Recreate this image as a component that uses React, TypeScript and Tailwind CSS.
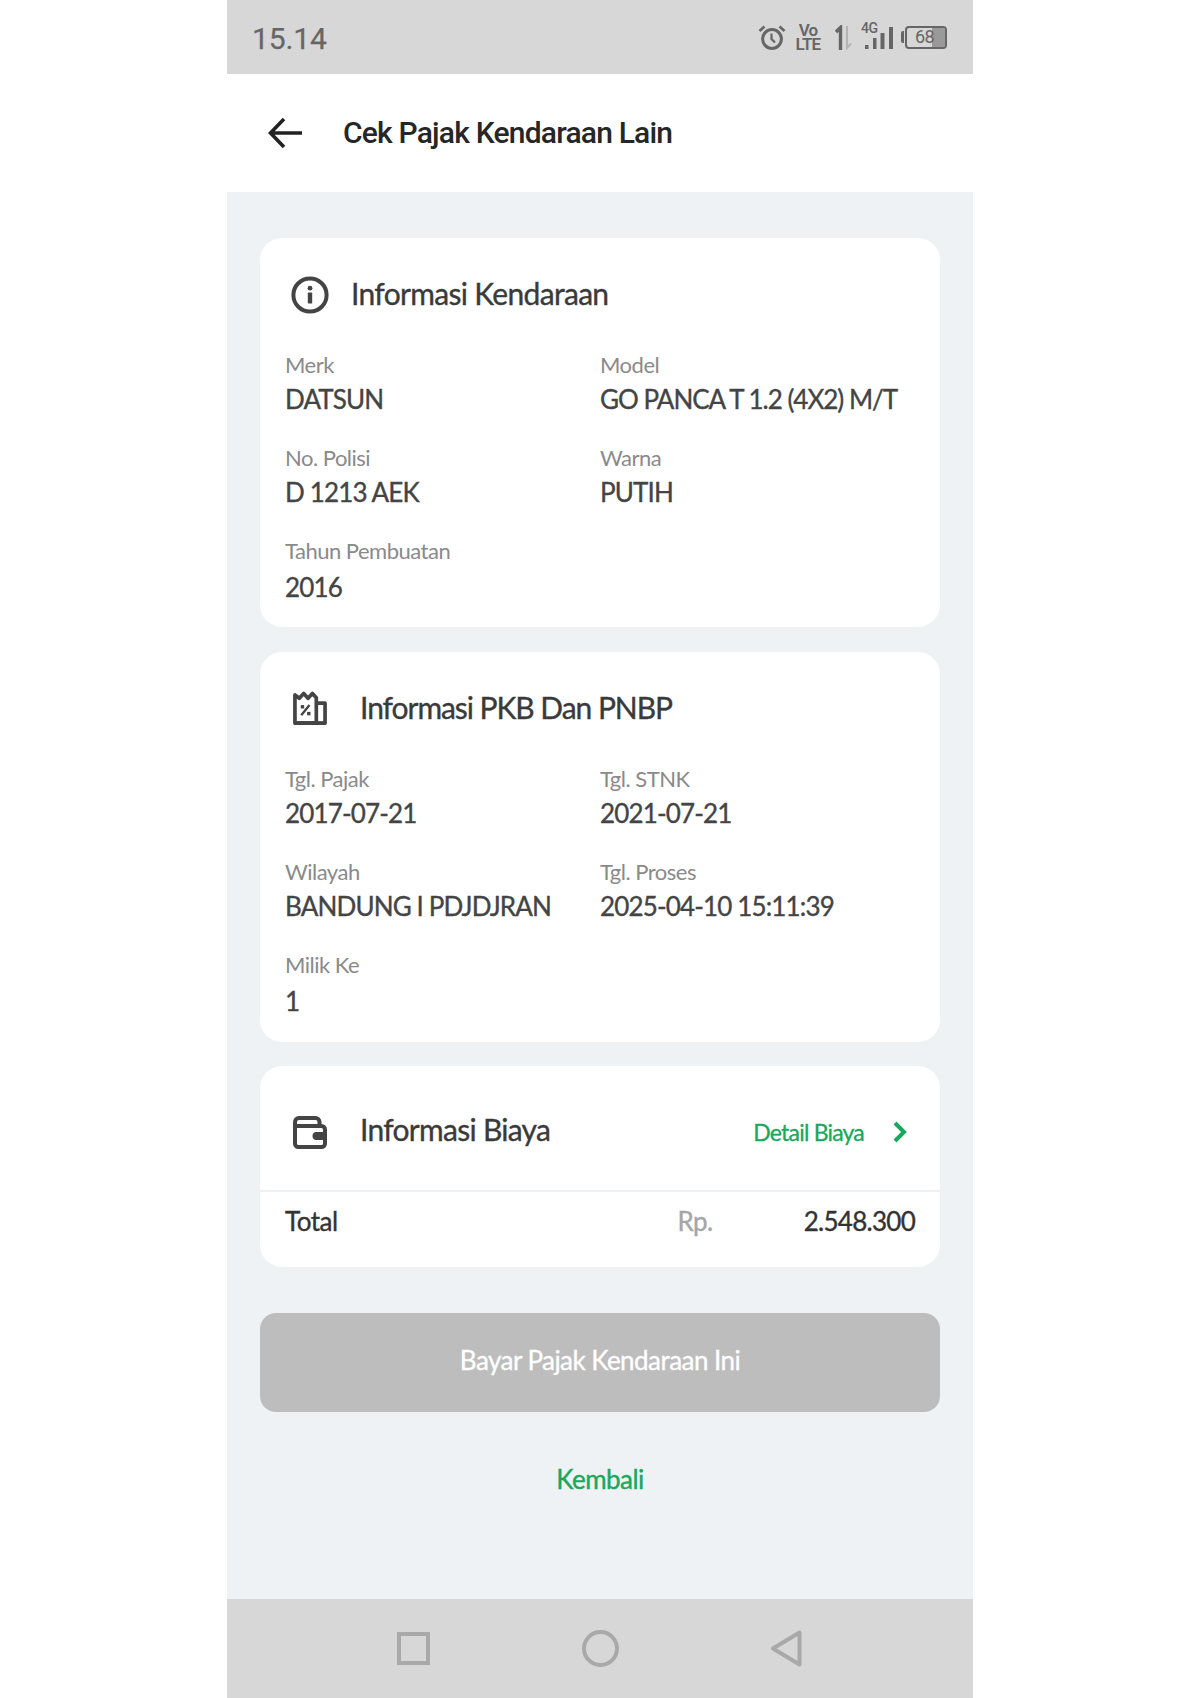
import React from "react";

const lato = "font-['Lato','Liberation_Sans',sans-serif]";

function Field({ label, value, extra, tight }: { label: string; value: string; extra?: boolean; tight?: boolean }) {
  return (
    <div>
      <div className="h-[34px] text-[22px] leading-[34px] tracking-[-0.5px] text-[#8a8a8a]">{label}</div>
      <div
        className={`h-[34px] text-[26px] font-normal leading-[34px] whitespace-nowrap text-[#444444] [-webkit-text-stroke:0.35px_#444444] ${tight ? "tracking-[-1px]" : "tracking-[-0.85px]"} ${extra ? "mt-[2px]" : ""}`}
      >
        {value}
      </div>
    </div>
  );
}

function Grid({ items }: { items: [string, string][] }) {
  return (
    <div className="grid grid-cols-[315px_1fr] gap-y-[25px] pl-[25px]">
      {items.map(([l, v], i) => (
        <Field key={l} label={l} value={v} extra={i === 4} tight={v.startsWith("GO")} />
      ))}
    </div>
  );
}

function InfoIcon() {
  return (
    <svg width="38" height="38" viewBox="0 0 38 38" fill="none" className="shrink-0">
      <circle cx="19" cy="19" r="16.6" stroke="#444" strokeWidth="4" />
      <circle cx="19" cy="12.2" r="2.4" fill="#444" />
      <rect x="16.800" y="16.500" width="4.400" height="11" rx="0.800" fill="#444" />
    </svg>
  );
}

function ReceiptIcon() {
  return (
    <svg width="34" height="34" viewBox="0 0 35 35" fill="none" className="shrink-0">
      <path d="M2 33V4l4.500 3.500L11 2.500l4.500 5 4.500-5 4 4.500V33Z" stroke="#444" strokeWidth="3.800" strokeLinejoin="round" />
      <path d="M24 12.500h9V33H2" stroke="#444" strokeWidth="3.800" strokeLinejoin="round" />
      <path d="M1 31.500h33V35H1Z" fill="#444" />
      <path d="M8.500 25 17 14.500" stroke="#444" strokeWidth="2.400" />
      <rect x="8" y="14.500" width="3.500" height="3.500" fill="#444" />
      <rect x="14.500" y="21.500" width="3.500" height="3.500" fill="#444" />
    </svg>
  );
}

function WalletIcon() {
  return (
    <svg width="34" height="33" viewBox="0 0 34 33" fill="none" className="shrink-0">
      <path d="M2 8V27.500a3.500 3.500 0 0 0 3.500 3.500H28.500a3.500 3.500 0 0 0 3.500-3.500V13.500a3.500 3.500 0 0 0-3.500-3.500H2" stroke="#444" strokeWidth="4" />
      <path d="M2 10V6A4 4 0 0 1 6 2H22.500a4 4 0 0 1 4 4V10" stroke="#444" strokeWidth="4" />
      <path d="M33.500 16H23.500a4 4 0 0 0 0 8h10Z" fill="#444" />
    </svg>
  );
}

function StatusIcons() {
  return (
    <div className="flex items-center font-['Roboto',sans-serif] text-[#666666]">
      <svg width="28" height="25" viewBox="0 0 28 25" fill="none" className="shrink-0">
        <circle cx="14" cy="14" r="9.400" stroke="#666" strokeWidth="3" />
        <path d="M13.500 8.500V14l3.500 3.500" stroke="#666" strokeWidth="2.200" />
        <path d="M1.500 6 6.500 1.500M26.500 6 21.500 1.500" stroke="#666" strokeWidth="2.600" />
      </svg>
      <div className="ml-[9px] flex h-[29px] w-[26px] flex-col items-center text-[17px] font-semibold leading-[15px] tracking-[-0.8px]">
        <span className="block h-[14px] leading-[14px]">Vo</span>
        <span className="block h-[15px] leading-[15px]">LTE</span>
      </div>
      <svg width="17" height="25" viewBox="0 0 17 25" fill="none" className="ml-[14px] shrink-0">
        <path d="M5.500 25V2.500L1 7" stroke="#666" strokeWidth="3.400" />
        <path d="M12 1v22l4-4.500" stroke="#b3b3b3" strokeWidth="2" />
      </svg>
      <div className="relative ml-[9px] h-[29px] w-[33px]">
        <span className="absolute left-0 top-[-2px] text-[14px] font-medium leading-[14px] tracking-[-0.5px]">4G</span>
        <svg width="33" height="29" viewBox="0 0 33 29" className="absolute left-0 top-0">
          <rect x="4" y="22" width="3.500" height="4" fill="#666" />
          <rect x="12" y="15" width="3.500" height="11" fill="#666" />
          <rect x="19.500" y="10" width="4" height="16" fill="#666" />
          <rect x="28" y="4" width="4" height="22" fill="#666" />
        </svg>
      </div>
      <div className="ml-[7px] flex items-center">
        <div className="h-[12px] w-[3px] rounded-l-[2px] bg-[#666666]" />
        <div className="relative ml-[1px] flex h-[23px] w-[42px] items-center overflow-hidden rounded-[4px] border-2 border-[#666666]">
          <div className="absolute inset-y-0 right-0 w-[13px] bg-[#999999]" />
          <span className="relative ml-[8px] text-[18px] leading-none tracking-[-0.6px]">68</span>
        </div>
      </div>
    </div>
  );
}

function Card({ children, className = "" }: { children: React.ReactNode; className?: string }) {
  return <section className={`rounded-[22px] bg-white ${className}`}>{children}</section>;
}

const headingClass = "text-[30px] font-normal leading-none text-[#3a3a3a] [-webkit-text-stroke:0.35px_#3a3a3a]";

export default function App() {
  return (
    <div className="flex min-h-[1698px] justify-center bg-white">
      <div className={`flex h-[1698px] w-[746px] flex-col bg-[#eef2f4] ${lato}`}>
        <div className="flex h-[74px] shrink-0 items-center justify-between bg-[#d7d7d7] pl-[25px] pr-[26px]">
          <span className="pt-[4px] font-['Roboto',sans-serif] text-[30px] leading-none tracking-[-0.15px] text-[#666666] [-webkit-text-stroke:0.25px_#666666]">15.14</span>
          <StatusIcons />
        </div>

        <header className="flex h-[118px] shrink-0 items-center bg-white pl-[41px]">
          <svg width="34" height="32" viewBox="0 0 34 32" fill="none" className="shrink-0">
            <path d="M34 16H3M16 2 2.500 16 16 30" stroke="#222" strokeWidth="3.600" />
          </svg>
          <h1 className="ml-[41px] font-['Roboto',sans-serif] text-[30px] font-medium leading-none tracking-[-0.8px] text-[#262626]">Cek Pajak Kendaraan Lain</h1>
        </header>

        <main className="flex flex-1 flex-col px-[33px] pt-[46px]">
          <Card className="h-[389px]">
            <div className="flex h-[110px] items-center pl-[31px] pt-[4px]">
              <InfoIcon />
              <h2 className={`mb-[5px] ml-[22px] tracking-[-0.68px] ${headingClass}`}>Informasi Kendaraan</h2>
            </div>
            <Grid
              items={[
                ["Merk", "DATSUN"],
                ["Model", "GO PANCA T 1.2 (4X2) M/T"],
                ["No. Polisi", "D 1213 AEK"],
                ["Warna", "PUTIH"],
                ["Tahun Pembuatan", "2016"],
              ]}
            />
          </Card>

          <Card className="mt-[25px] h-[390px]">
            <div className="flex h-[110px] items-center pl-[33px] pt-[2px]">
              <ReceiptIcon />
              <h2 className={`mb-[2px] ml-[33px] tracking-[-1.05px] ${headingClass}`}>Informasi PKB Dan PNBP</h2>
            </div>
            <Grid
              items={[
                ["Tgl. Pajak", "2017-07-21"],
                ["Tgl. STNK", "2021-07-21"],
                ["Wilayah", "BANDUNG I PDJDJRAN"],
                ["Tgl. Proses", "2025-04-10 15:11:39"],
                ["Milik Ke", "1"],
              ]}
            />
          </Card>

          <Card className="mt-[24px] h-[201px]">
            <div className="flex h-[126px] items-center border-b-2 border-[#eef1f3] pl-[33px] pr-[33px] pt-[8px]">
              <WalletIcon />
              <h2 className={`mb-[6px] ml-[33px] tracking-[-0.72px] ${headingClass}`}>Informasi Biaya</h2>
              <span className="ml-auto text-[23px] leading-none tracking-[-0.8px] text-[#17a85b] [-webkit-text-stroke:0.3px_#17a85b]">Detail Biaya</span>
              <svg width="14" height="22" viewBox="0 0 14 22" fill="none" className="ml-[29px] shrink-0">
                <path d="M2 2 11 11 2 20" stroke="#17a85b" strokeWidth="4" />
              </svg>
            </div>
            <div className="flex h-[58px] items-center pl-[25px] pr-[25px] text-[26px]">
              <span className="tracking-[-0.5px] text-[#333333] [-webkit-text-stroke:0.35px_#333333]">Total</span>
              <span className="ml-auto tracking-[-0.6px] text-[#a6a6a6] [-webkit-text-stroke:0.35px_#a6a6a6]">Rp.</span>
              <span className="ml-[91px] tracking-[-0.72px] text-[#333333] [-webkit-text-stroke:0.35px_#333333]">2.548.300</span>
            </div>
          </Card>

          <button className="mt-[46px] h-[99px] w-full rounded-[16px] bg-[#bdbdbd] pb-[6px] text-[26px] leading-none tracking-[-0.55px] text-white [-webkit-text-stroke:0.3px_#ffffff]">Bayar Pajak Kendaraan Ini</button>
          <div className="mt-[50px] text-center text-[26px] leading-[34px] tracking-[-0.55px] text-[#17a85b] [-webkit-text-stroke:0.35px_#17a85b]">Kembali</div>
        </main>

        <nav className="flex h-[99px] shrink-0 items-center justify-center bg-[#d7d7d7] pr-[2px]">
          <div className="h-[33px] w-[33px] border-4 border-[#a9a9a9]" />
          <div className="ml-[152px] h-[37px] w-[37px] rounded-full border-4 border-[#a9a9a9]" />
          <svg width="32" height="37" viewBox="0 0 32 37" fill="none" className="ml-[151px] shrink-0">
            <path d="M29.500 2.500V34.500L3 18.500Z" stroke="#a9a9a9" strokeWidth="4" strokeLinejoin="round" />
          </svg>
        </nav>
      </div>
    </div>
  );
}
